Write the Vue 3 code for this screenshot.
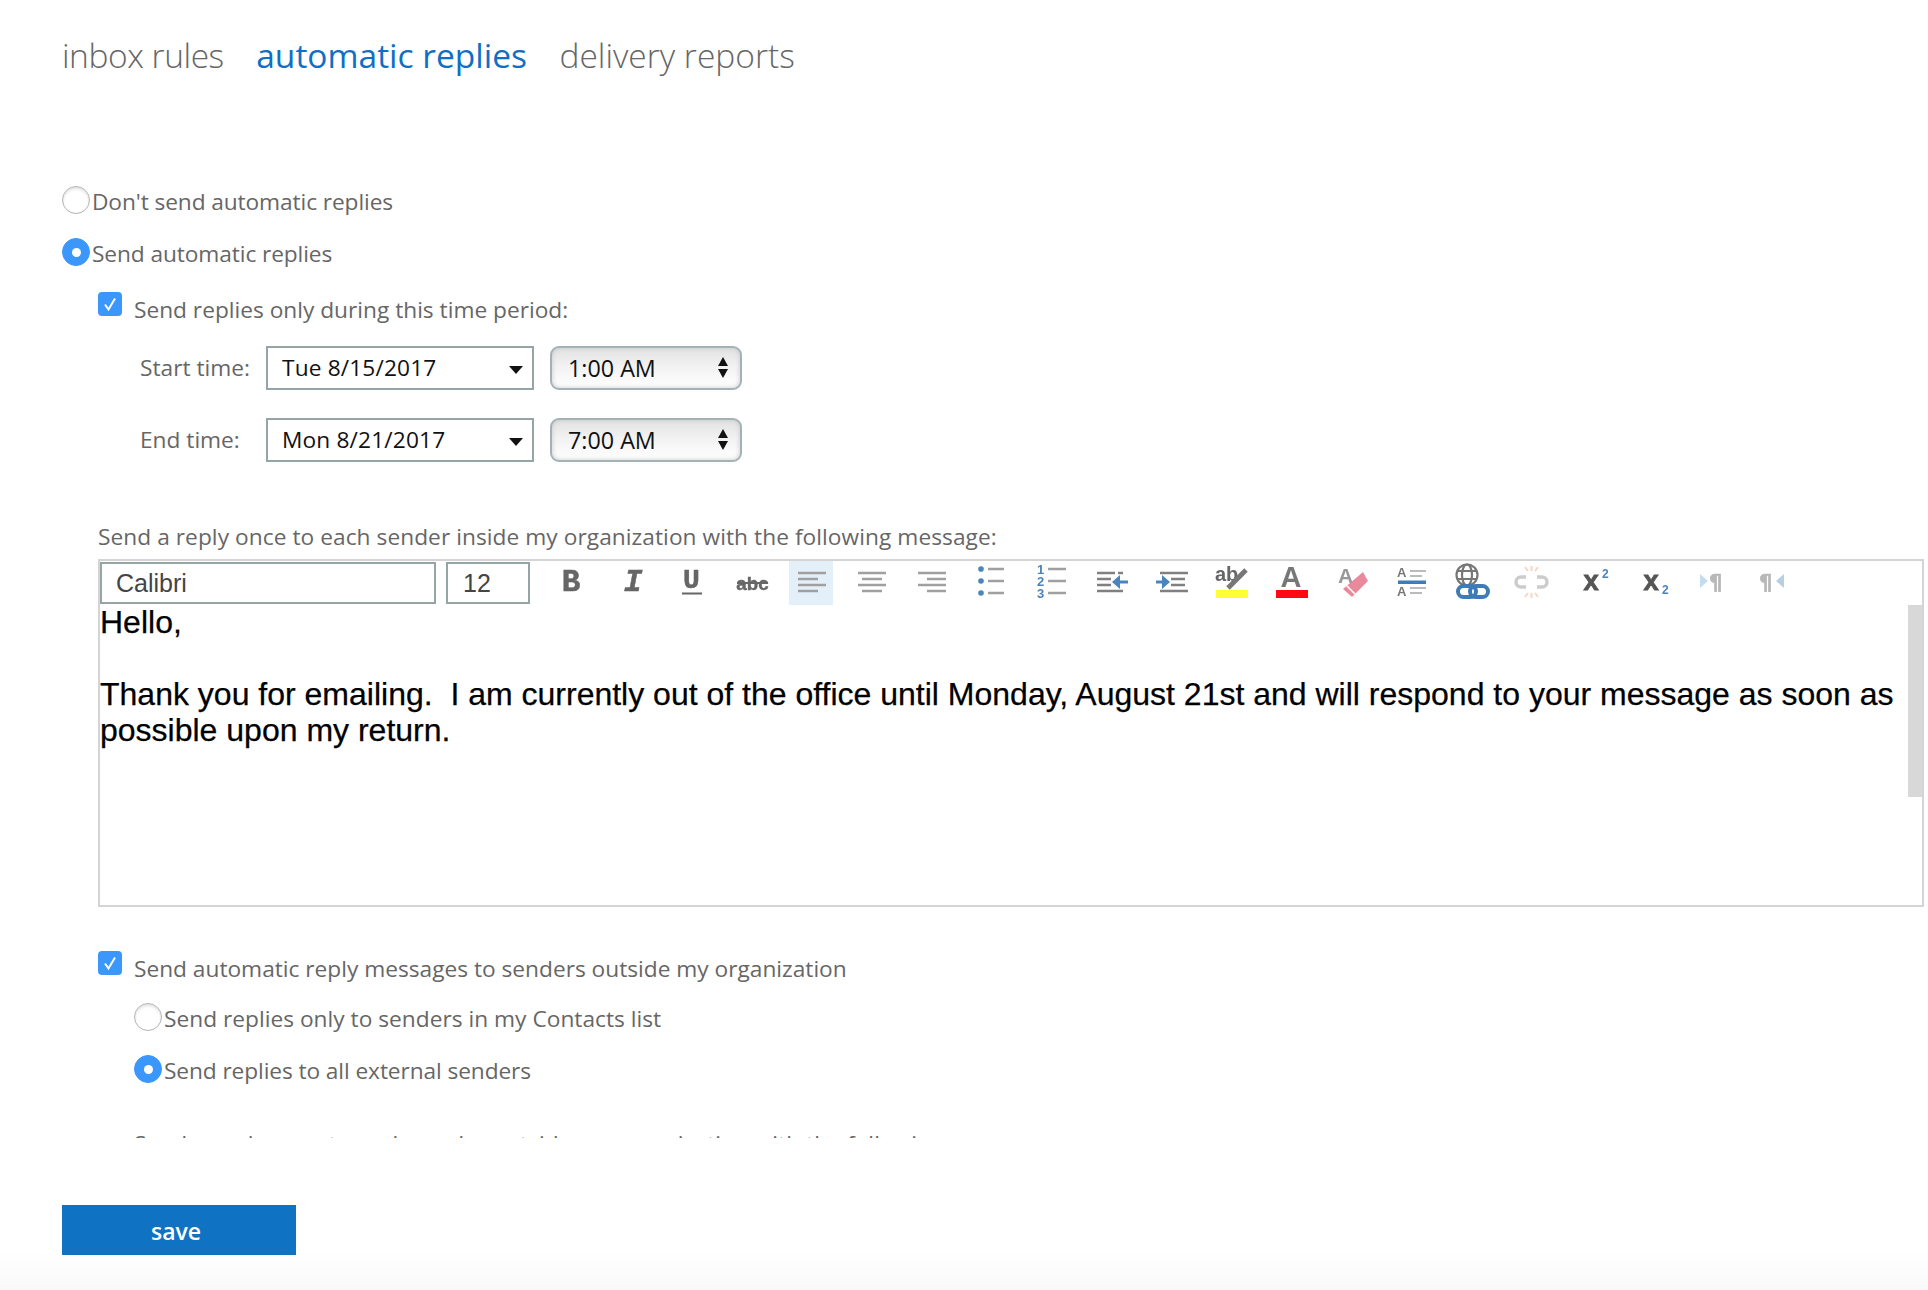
<script setup>
</script>

<template>
  <div class="page">
    <nav class="tabs">
      <span class="tab first-tab">inbox rules</span>
      <span class="tab active">automatic replies</span>
      <span class="tab">delivery reports</span>
    </nav>

    <main class="scroll">
      <div class="row radio-row">
        <span class="radio"></span><span class="label">Don't send automatic replies</span>
      </div>
      <div class="row radio-row second">
        <span class="radio on"></span><span class="label">Send automatic replies</span>
      </div>

      <div class="row check-row period">
        <span class="check"><svg width="24" height="24" viewBox="0 0 24 24"><path d="M7 12.5l3.5 5L17 6.5" fill="none" stroke="#fff" stroke-width="2"/></svg></span>
        <span class="label lowered">Send replies only during this time period:</span>
      </div>

      <div class="time-row first">
        <span class="time-label">Start time:</span>
        <div class="date">Tue 8/15/2017<i class="caret"></i></div>
        <div class="time">1:00 AM<span class="spin"><i></i><i></i></span></div>
      </div>
      <div class="time-row next">
        <span class="time-label">End time:</span>
        <div class="date">Mon 8/21/2017<i class="caret"></i></div>
        <div class="time">7:00 AM<span class="spin"><i></i><i></i></span></div>
      </div>

      <p class="para">Send a reply once to each sender inside my organization with the following message:</p>

      <section class="editor">
        <div class="toolbar">
          <div class="field font">Calibri</div>
          <div class="field size">12</div>
          <div class="tools">
            <span class="tb"><svg viewBox="0 0 44 44"><text x="22" y="30" text-anchor="middle" class="mono b big">B</text></svg></span>
            <span class="tb"><svg viewBox="0 0 44 44"><text x="24" y="30" text-anchor="middle" class="mono bi big">I</text></svg></span>
            <span class="tb"><svg viewBox="0 0 44 44"><text x="22.500" y="27" text-anchor="middle" class="mono b">U</text><rect x="13" y="31.500" width="20" height="2" fill="#666"/></svg></span>
            <span class="tb"><svg viewBox="0 0 44 44"><text x="23.500" y="29" text-anchor="middle" class="abc">abc</text><rect x="8" y="21" width="31" height="2" fill="#666"/></svg></span>
            <span class="tb sel"><svg viewBox="0 0 44 44"><path d="M9 12h28M9 18h20M9 24h28M9 30h20" class="ln"/></svg></span>
            <span class="tb"><svg viewBox="0 0 44 44"><path d="M9 12h28M13 18h20M9 24h28M13 30h20" class="ln"/></svg></span>
            <span class="tb"><svg viewBox="0 0 44 44"><path d="M9 12h28M18 18h19M9 24h28M18 30h19" class="ln"/></svg></span>
            <span class="tb"><svg viewBox="0 0 44 44"><circle cx="12" cy="8" r="2.800" class="blue"/><circle cx="12" cy="20" r="2.800" class="blue"/><circle cx="12" cy="32" r="2.800" class="blue"/><path d="M19 8h16M19 20h16M19 32h16" class="ln"/></svg></span>
            <span class="tb"><svg viewBox="0 0 44 44"><text x="11.500" y="13" class="num">1</text><text x="11.500" y="25" class="num">2</text><text x="11.500" y="37" class="num">3</text><path d="M19 8h18M19 20h18M19 32h18" class="ln"/></svg></span>
            <span class="tb"><svg viewBox="0 0 44 44"><path d="M8 12h18M29 12h5M8 18h14M8 24h14M8 30h26" class="ln dark"/><path d="M39 21H28" class="arrow"/><path d="M31 14l-8 7 8 7z" class="blue"/></svg></span>
            <span class="tb"><svg viewBox="0 0 44 44"><path d="M11 12h28M22 18h14M22 24h14M11 30h28" class="ln dark"/><path d="M7 21h9" class="arrow"/><path d="M13 14l8 7-8 7z" class="blue"/></svg></span>
            <span class="tb"><svg viewBox="0 0 44 44"><text x="6" y="20" class="ab">ab</text><path d="M37 9L19 27" stroke="#777" stroke-width="5"/><rect x="7" y="29" width="32" height="8" fill="#ffff33"/></svg></span>
            <span class="tb"><svg viewBox="0 0 44 44"><text x="22" y="26" text-anchor="middle" class="bigA">A</text><rect x="7" y="29" width="32" height="8" fill="#ff0a14"/></svg></span>
            <span class="tb"><svg viewBox="0 0 44 44"><text x="9" y="22" class="smA">A</text><path d="M34 11l5 9-16 16-9-8z" fill="#e88a9b"/><path d="M17 24l9 9" stroke="#fff" stroke-width="1.600"/></svg></span>
            <span class="tb"><svg viewBox="0 0 44 44"><text x="8" y="16" class="tinyA">A</text><text x="8" y="35" class="tinyA">A</text><path d="M21 10h16M21 15h12M21 27h16M21 32h12" stroke="#bbb" stroke-width="2"/><rect x="9" y="19.500" width="28" height="3.500" fill="#3f7cb5"/></svg></span>
            <span class="tb"><svg viewBox="0 0 44 44"><circle cx="18" cy="14" r="10.500" class="globe"/><ellipse cx="18" cy="14" rx="5" ry="10.500" class="globe"/><path d="M8 10h20M8 18h20" class="globe"/><rect x="9" y="25" width="18" height="11" rx="5.500" class="chain"/><rect x="21" y="25" width="18" height="11" rx="5.500" class="chain"/></svg></span>
            <span class="tb"><svg viewBox="0 0 44 44"><path d="M17 16h-5a5 5 0 0 0 0 10h5M28 16h5a5 5 0 0 1 0 10h-5" fill="none" stroke="#ccc" stroke-width="3.500"/><path d="M16 6l3 4M22.500 5v5M29 6l-3 4M16 36l3-4M22.500 37v-5M29 36l-3-4" stroke="#f6d6c0" stroke-width="2"/></svg></span>
            <span class="tb"><svg viewBox="0 0 44 44"><text x="22" y="29" text-anchor="middle" class="mono b xx">x</text><text x="33" y="17" class="idx">2</text></svg></span>
            <span class="tb"><svg viewBox="0 0 44 44"><text x="22" y="29" text-anchor="middle" class="mono b xx">x</text><text x="33" y="33" class="idx">2</text></svg></span>
            <span class="tb"><svg viewBox="0 0 44 44"><path d="M11 13l8 7-8 7z" fill="#c5dcee"/><text x="20" y="29" class="para-m">¶</text></svg></span>
            <span class="tb"><svg viewBox="0 0 44 44"><text x="10" y="29" class="para-m">¶</text><path d="M35 13l-8 7 8 7z" fill="#b8cfe2"/></svg></span>
          </div>
        </div>
        <div class="body">
          <p>Hello,</p>
          <p class="blank">&nbsp;</p>
          <p>Thank you for emailing.&nbsp; I am currently out of the office until Monday, August 21st and will respond to your message as soon as possible upon my return.</p>
        </div>
        <div class="bar"></div>
      </section>

      <div class="row check-row outside">
        <span class="check"><svg width="24" height="24" viewBox="0 0 24 24"><path d="M7 12.500l3.500 5L17 6.500" fill="none" stroke="#fff" stroke-width="2"/></svg></span>
        <span class="label lowered">Send automatic reply messages to senders outside my organization</span>
      </div>
      <div class="row radio-row sub">
        <span class="radio"></span><span class="label wide">Send replies only to senders in my Contacts list</span>
      </div>
      <div class="row radio-row sub second">
        <span class="radio on"></span><span class="label">Send replies to all external senders</span>
      </div>
      <p class="para clipped">Send a reply once to each sender outside my organization with the following message:</p>
    </main>

    <footer class="foot">
      <button class="save" type="button">save</button>
    </footer>
  </div>
</template>

<style>
html, body { margin: 0; background: #fff; }
</style>

<style scoped>
.page {
  width: 1928px;
  height: 1290px;
  overflow: hidden;
  font-family: "Open Sans", "Noto Sans", sans-serif;
  font-size: 22.700px;
  color: #666;
  background: linear-gradient(#fff 1250px, #f9f9f9 1290px);
}
.tabs {
  height: 112px;
  padding-left: 62px;
  display: flex;
  gap: 32.500px;
  line-height: 110px;
  font-size: 33.500px;
  font-weight: 300;
}
.tab { color: #666; }
.first-tab { letter-spacing: -0.450px; }
.tab.active { color: #0f6fc6; font-weight: 400; }
.scroll {
  height: 952px;
  margin-top: 74px;
  padding-left: 62px;
  overflow: hidden;
}
.row { display: flex; align-items: center; }
.radio-row { height: 28px; }
.radio-row .label { margin-left: 2px; position: relative; top: 2px; letter-spacing: -0.090px; }
.radio-row .label.wide { letter-spacing: 0.020px; }
.second { margin-top: 24px; }
.sub { margin-left: 72px; }
.sub.second { margin-top: 24px; }
.radio {
  width: 28px;
  height: 28px;
  box-sizing: border-box;
  border: 1.500px solid #b4b4b4;
  border-radius: 50%;
  background: #fff;
  box-shadow: inset 0 2px 3px #e2e2e2;
  flex: none;
  display: flex;
  align-items: center;
  justify-content: center;
}
.radio.on { background: #3b97fb; border-color: #3b97fb; box-shadow: none; }
.radio.on::after {
  content: "";
  width: 9px;
  height: 9px;
  background: #fff;
  border-radius: 50%;
}
.check-row { margin-left: 36px; height: 24px; }
.period { margin-top: 26px; }
.outside { margin-top: 44px; }
.sub:not(.second) { margin-top: 28px; }
.check {
  width: 24px;
  height: 24px;
  border-radius: 4px;
  background: #3b97fb;
  flex: none;
}
.check svg { display: block; }
.label { line-height: 32px; white-space: nowrap; }
.lowered { margin-left: 12px; position: relative; top: 6px; }
.time-row { display: flex; align-items: center; margin-left: 78px; height: 43px; }
.first { margin-top: 30px; }
.next { margin-top: 29px; }
.time-label { width: 126px; flex: none; }
.date {
  width: 268px;
  height: 44px;
  box-sizing: border-box;
  border: 2px solid #95a5a6;
  padding-left: 14px;
  line-height: 40px;
  color: #111;
  letter-spacing: 0.150px;
  display: flex;
  align-items: center;
  justify-content: space-between;
}
.caret {
  width: 0;
  height: 0;
  border: 7.500px solid transparent;
  border-top: 8px solid #111;
  border-bottom: 0;
  margin: 4px 9px 0 0;
}
.time {
  width: 192px;
  height: 44px;
  margin-left: 16px;
  box-sizing: border-box;
  border: 2px solid #a3b3b5;
  border-radius: 9px;
  padding-left: 16px;
  font-size: 23.300px;
  line-height: 38px;
  color: #111;
  background: linear-gradient(#e2e2e2, #f2f2f2 45%, #fff);
  box-shadow: inset 0 0 5px #c8c8c8;
  display: flex;
  align-items: center;
  justify-content: space-between;
}
.spin { display: flex; flex-direction: column; gap: 3px; margin-right: 12px; }
.spin i {
  width: 0;
  height: 0;
  border-left: 5.500px solid transparent;
  border-right: 5.500px solid transparent;
}
.spin i:first-child { border-bottom: 9px solid #111; }
.spin i:last-child { border-top: 9px solid #111; }
.para {
  margin: 60px 0 0 36px;
  line-height: 32px;
  white-space: nowrap;
  letter-spacing: 0.060px;
}
.clipped { margin-top: 45px; margin-left: 72px; }
.editor {
  position: relative;
  margin: 6px 0 0 36px;
  width: 1826px;
  height: 348px;
  box-sizing: border-box;
  border: 2px solid #d4d4d4;
  background: #fff;
}
.toolbar { display: flex; height: 42px; margin-top: 1px; }
.field {
  height: 42px;
  box-sizing: border-box;
  border: 2px solid #95a5a6;
  font-family: "Liberation Sans", Arial, sans-serif;
  font-size: 25px;
  line-height: 38px;
  color: #444;
  padding-left: 15px;
}
.font { width: 336px; padding-left: 14px; }
.size { width: 84px; margin-left: 10px; }
.tools { display: flex; margin-left: 11px; }
.tb {
  width: 60px;
  height: 44px;
  margin-top: -1px;
  display: flex;
  justify-content: center;
  flex: none;
}
.tb svg { width: 44px; height: 44px; display: block; filter: blur(0.5px); }
.tb.sel svg { background: #e3f0f9; }
.body {
  width: 1806px;
  font-family: "Liberation Sans", Arial, sans-serif;
  font-size: 32px;
  line-height: 36px;
  color: #000;
  -webkit-text-stroke: 0.250px #000;
}
.body p { margin: 0; }
.bar {
  position: absolute;
  right: 0;
  top: 44px;
  width: 14px;
  height: 192px;
  background: #d8d8d8;
}
.foot { padding: 67px 0 0 62px; }
.save {
  display: block;
  width: 234px;
  height: 50px;
  border: 0;
  padding: 2px 6px 0 0;
  background: #1072c3;
  color: #fff;
  font-family: "Open Sans", sans-serif;
  font-size: 23px;
  font-weight: 600;
  line-height: 48px;
}
.ln { stroke: #a0a0a0; stroke-width: 2.500; fill: none; }
.ln.dark { stroke: #808080; }
.blue { fill: #4a84bd; }
.arrow { stroke: #4a84bd; stroke-width: 3; fill: none; }
.mono { font-family: "Liberation Mono", monospace; font-size: 28px; fill: #666; stroke: #666; stroke-width: 0.500px; }
.big { font-size: 31px; }
.b { font-weight: 700; }
.bi { font-weight: 700; font-style: italic; }
.xx { font-size: 27px; fill: #555; stroke: #555; stroke-width: 0.800px; }
.abc { font-family: "Liberation Sans", sans-serif; font-weight: 700; font-size: 18.800px; fill: #666; stroke: #666; stroke-width: 0.400px; }
.num { font-family: "Liberation Sans", sans-serif; font-weight: 700; font-size: 13px; fill: #4a84bd; text-anchor: middle; }
.ab { font-family: "Liberation Sans", sans-serif; font-weight: 700; font-size: 20px; fill: #666; }
.bigA { font-family: "Liberation Sans", sans-serif; font-weight: 700; font-size: 29px; fill: #777; }
.smA { font-family: "Liberation Sans", sans-serif; font-weight: 700; font-size: 21px; fill: #999; }
.tinyA { font-family: "Liberation Sans", sans-serif; font-weight: 700; font-size: 13px; fill: #777; }
.globe { fill: none; stroke: #777; stroke-width: 2.200; }
.chain { fill: none; stroke: #3f7cb5; stroke-width: 4; }
.idx { font-family: "Liberation Sans", sans-serif; font-weight: 700; font-size: 12px; fill: #4a84bd; }
.para-m { font-family: "DejaVu Sans", sans-serif; font-weight: 700; font-size: 21px; fill: #b8b8b8; stroke: #b8b8b8; stroke-width: 0.700px; }
</style>
